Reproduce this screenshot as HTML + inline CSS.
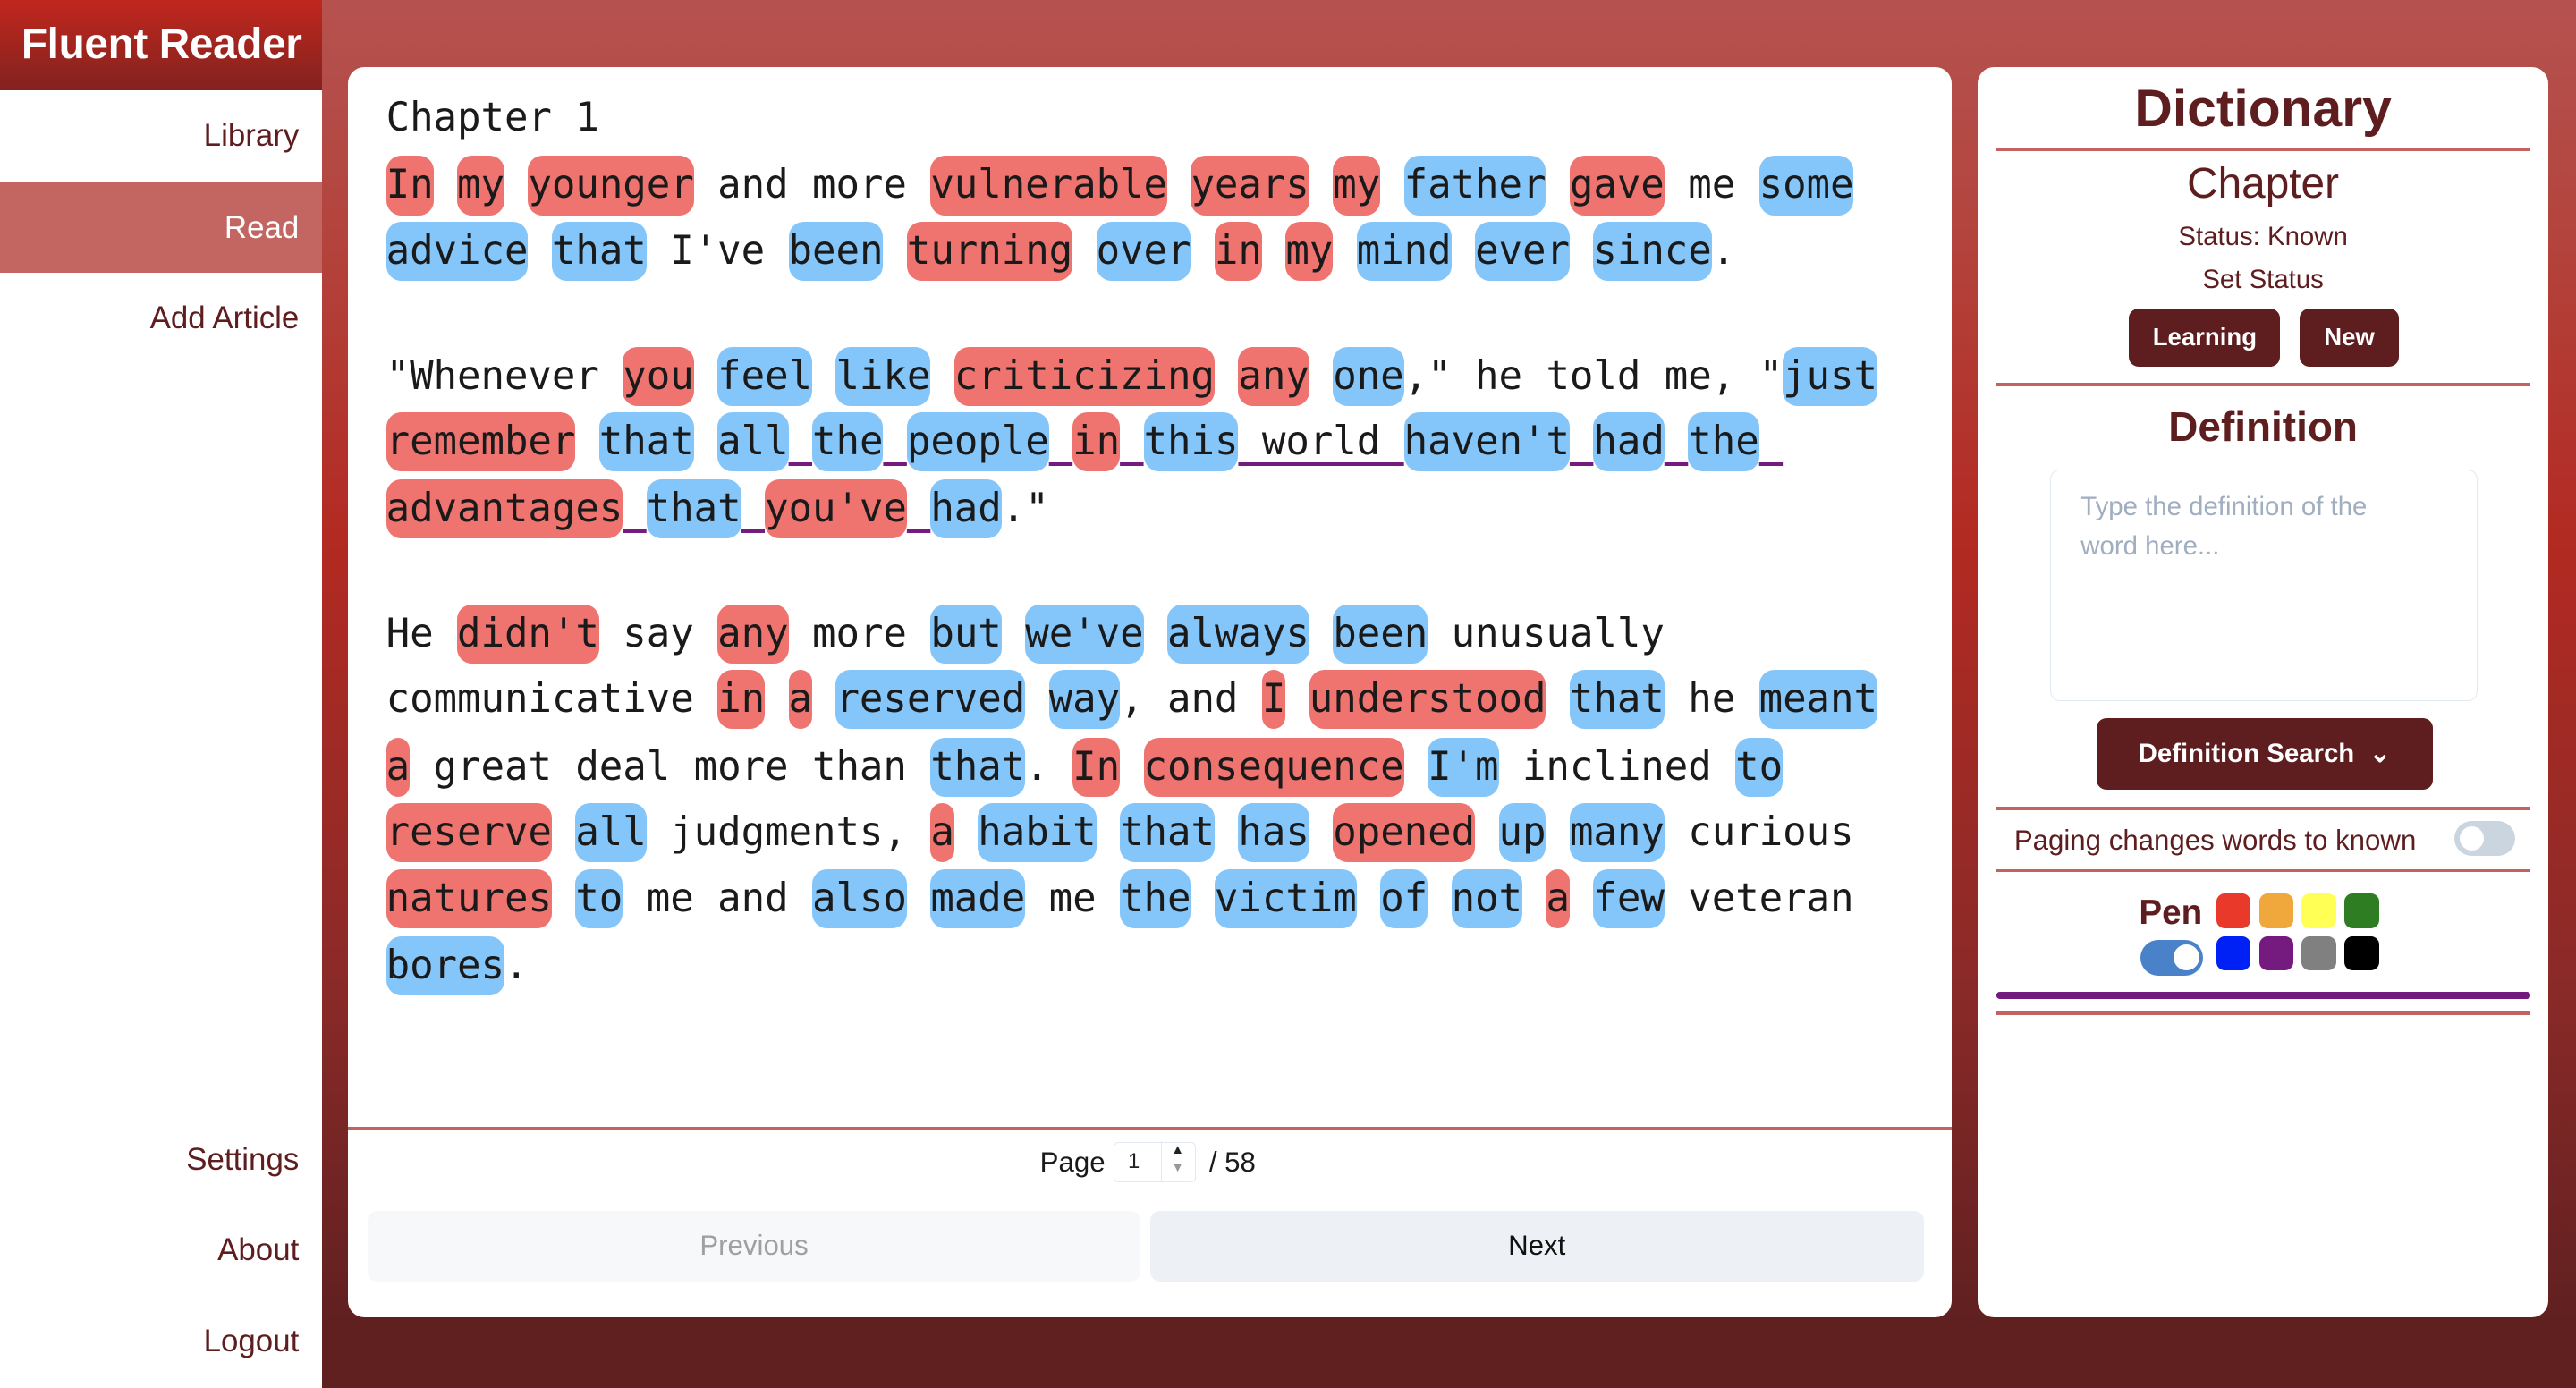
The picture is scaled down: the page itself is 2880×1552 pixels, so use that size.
<!DOCTYPE html>
<html><head><meta charset="utf-8">
<style>
html{zoom:1.83673}
*{box-sizing:border-box;margin:0;padding:0}
body{width:1568px;height:845px;overflow:hidden;position:relative;font-family:"Liberation Sans",sans-serif;background:linear-gradient(#b5524f 0px,#b3433c 150px,#b22a22 330px,#8a2a28 600px,#612020 802px,#612020 845px)}
.side{position:absolute;left:0;top:0;width:196px;height:845px;background:#fff}
.logo{height:55px;background:linear-gradient(#c0271e,#83221f);color:#fff;font-weight:bold;font-size:26px;padding:12px 0 0 13px;letter-spacing:-0.2px}
.nav{position:absolute;right:14px;font-size:19px;color:#5e1d1e;text-align:right}
.active{position:absolute;left:0;top:111px;width:196px;height:55px;background:#c36662}
.card{position:absolute;background:#fff;border-radius:10px}
.txt{position:absolute;left:235px;font-family:"DejaVu Sans Mono",monospace;font-size:24px;letter-spacing:-0.04px;white-space:pre;color:#1a1a1a;line-height:36px}
.r,.b{display:inline-block;border-radius:9px;height:36px}
.r{background:#ef7470}.b{background:#85c6fa}
.u{text-decoration:underline;text-decoration-color:#751b7f;text-decoration-thickness:2px;text-underline-offset:5px}
.hr{position:absolute;left:1215px;width:325px;height:2px;background:#c3625e}
.c{position:absolute;text-align:center;color:#5e1d1e}
.btn{position:absolute;background:#5e1d1e;color:#fff;border-radius:6px;font-weight:bold;font-size:15px;text-align:center}
.sw{position:absolute;width:21px;height:21px;border-radius:5px}
</style></head><body>
<div class="side">
<div class="logo">Fluent Reader</div>
<div class="active"></div>
<div class="nav" style="top:72px">Library</div>
<div class="nav" style="top:128px;color:#fff">Read</div>
<div class="nav" style="top:183px">Add Article</div>
<div class="nav" style="top:695px">Settings</div>
<div class="nav" style="top:750px">About</div>
<div class="nav" style="top:806px">Logout</div>
</div>

<div class="card" style="left:212px;top:41px;width:976px;height:761px"></div>
<div class="txt" style="top:54px">Chapter 1</div>
<div class="txt" style="top:95px"><span class="r">In</span> <span class="r">my</span> <span class="r">younger</span> and more <span class="r">vulnerable</span> <span class="r">years</span> <span class="r">my</span> <span class="b">father</span> <span class="r">gave</span> me <span class="b">some</span></div>
<div class="txt" style="top:135px"><span class="b">advice</span> <span class="b">that</span> I've <span class="b">been</span> <span class="r">turning</span> <span class="b">over</span> <span class="r">in</span> <span class="r">my</span> <span class="b">mind</span> <span class="b">ever</span> <span class="b">since</span>.</div>
<div class="txt" style="top:211px">"Whenever <span class="r">you</span> <span class="b">feel</span> <span class="b">like</span> <span class="r">criticizing</span> <span class="r">any</span> <span class="b">one</span>," he told me, "<span class="b">just</span></div>
<div class="txt" style="top:251px"><span class="r">remember</span> <span class="b">that</span> <span class="u"><span class="b">all</span> <span class="b">the</span> <span class="b">people</span> <span class="r">in</span> <span class="b">this</span> world <span class="b">haven't</span> <span class="b">had</span> <span class="b">the</span> </span></div>
<div class="txt" style="top:292px"><span class="u"><span class="r">advantages</span> <span class="b">that</span> <span class="r">you've</span> <span class="b">had</span></span>."</div>
<div class="txt" style="top:368px">He <span class="r">didn't</span> say <span class="r">any</span> more <span class="b">but</span> <span class="b">we've</span> <span class="b">always</span> <span class="b">been</span> unusually</div>
<div class="txt" style="top:408px">communicative <span class="r">in</span> <span class="r">a</span> <span class="b">reserved</span> <span class="b">way</span>, and <span class="r">I</span> <span class="r">understood</span> <span class="b">that</span> he <span class="b">meant</span></div>
<div class="txt" style="top:449px"><span class="r">a</span> great deal more than <span class="b">that</span>. <span class="r">In</span> <span class="r">consequence</span> <span class="b">I'm</span> inclined <span class="b">to</span></div>
<div class="txt" style="top:489px"><span class="r">reserve</span> <span class="b">all</span> judgments, <span class="r">a</span> <span class="b">habit</span> <span class="b">that</span> <span class="b">has</span> <span class="r">opened</span> <span class="b">up</span> <span class="b">many</span> curious</div>
<div class="txt" style="top:529px"><span class="r">natures</span> <span class="b">to</span> me and <span class="b">also</span> <span class="b">made</span> me <span class="b">the</span> <span class="b">victim</span> <span class="b">of</span> <span class="b">not</span> <span class="r">a</span> <span class="b">few</span> veteran</div>
<div class="txt" style="top:570px"><span class="b">bores</span>.</div>

<div style="position:absolute;left:212px;top:686px;width:976px;height:2px;background:#c3625e"></div>
<div style="position:absolute;left:633px;top:698px;font-size:17px;color:#1a1a1a">Page</div>
<div style="position:absolute;left:678px;top:695px;width:50px;height:25px;border:1px solid #e2e8f0;border-radius:3px;font-size:13px;padding:4px 0 0 8px;color:#222">1<span style="position:absolute;left:28px;top:-1px;height:24px;border-left:1px solid #e2e8f0;width:20px;font-size:8px;text-align:center;line-height:11px">▲<br><span style="color:#999">▼</span></span></div>
<div style="position:absolute;left:736px;top:698px;font-size:17px;color:#1a1a1a">/ 58</div>
<div style="position:absolute;left:224px;top:737px;width:470px;height:43px;background:#f7f8fa;border-radius:6px;text-align:center;line-height:43px;font-size:17px;color:#a0a0a0">Previous</div>
<div style="position:absolute;left:700px;top:737px;width:471px;height:43px;background:#edf0f5;border-radius:6px;text-align:center;line-height:43px;font-size:17px;color:#111">Next</div>

<div class="card" style="left:1204px;top:41px;width:347px;height:761px"></div>
<div class="c" style="left:1204px;width:347px;top:48px;font-size:32px;font-weight:bold">Dictionary</div>
<div class="hr" style="top:90px"></div>
<div class="c" style="left:1204px;width:347px;top:97px;font-size:26px">Chapter</div>
<div class="c" style="left:1204px;width:347px;top:135px;font-size:16px">Status: Known</div>
<div class="c" style="left:1204px;width:347px;top:161px;font-size:16px">Set Status</div>
<div class="btn" style="left:1296px;top:188px;width:92px;height:35px;line-height:35px">Learning</div>
<div class="btn" style="left:1400px;top:188px;width:60px;height:35px;line-height:35px">New</div>
<div class="hr" style="top:233px"></div>
<div class="c" style="left:1204px;width:347px;top:245px;font-size:25px;font-weight:bold">Definition</div>
<div style="position:absolute;left:1248px;top:286px;width:260px;height:141px;border:1px solid #e2e8f0;border-radius:6px;padding:10px 40px 10px 18px;font-size:16px;color:#a0aec0;line-height:24px">Type the definition of the word here...</div>
<div class="btn" style="left:1276px;top:437px;width:205px;height:44px;line-height:44px;font-size:16px">Definition Search &nbsp;⌄</div>
<div class="hr" style="top:491px"></div>
<div style="position:absolute;left:1226px;top:502px;font-size:17px;color:#5e1d1e">Paging changes words to known</div>
<div style="position:absolute;left:1494px;top:500px;width:37px;height:21px;border-radius:11px;background:#cbd5e0"><div style="position:absolute;left:3px;top:3px;width:15px;height:15px;border-radius:50%;background:#fff"></div></div>
<div class="hr" style="top:529px"></div>
<div style="position:absolute;left:1302px;top:544px;font-size:21px;font-weight:bold;color:#5e1d1e">Pen</div>
<div style="position:absolute;left:1303px;top:572px;width:38px;height:22px;border-radius:11px;background:#4a82c9"><div style="position:absolute;left:20px;top:3px;width:16px;height:16px;border-radius:50%;background:#fff"></div></div>
<div class="sw" style="left:1349px;top:544px;background:#e8392b"></div>
<div class="sw" style="left:1375px;top:544px;background:#f0a83d"></div>
<div class="sw" style="left:1401px;top:544px;background:#ffff55"></div>
<div class="sw" style="left:1427px;top:544px;background:#2f7d22"></div>
<div class="sw" style="left:1349px;top:570px;background:#0021f5"></div>
<div class="sw" style="left:1375px;top:570px;background:#751b7f"></div>
<div class="sw" style="left:1401px;top:570px;background:#808080"></div>
<div class="sw" style="left:1427px;top:570px;background:#000"></div>
<div style="position:absolute;left:1215px;top:604px;width:325px;height:4px;border-radius:2px;background:#731a7f"></div>
<div class="hr" style="top:616px"></div>
</body></html>
